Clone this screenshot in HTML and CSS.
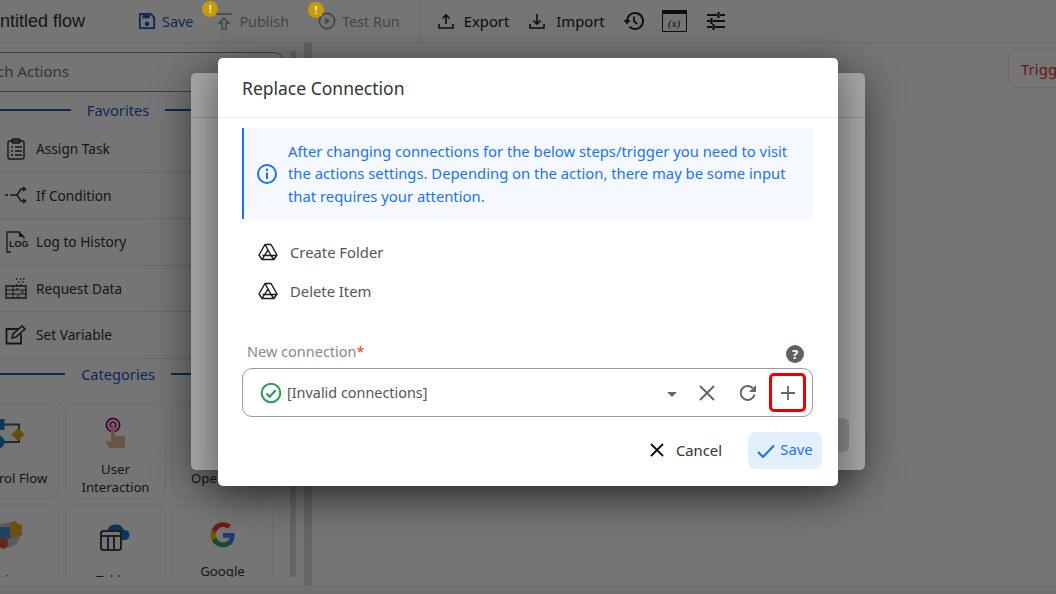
FILE: index.html
```html
<!DOCTYPE html>
<html lang="en">
<head>
<meta charset="utf-8">
<title>Replace Connection</title>
<link rel="stylesheet" href="styles.css">
</head>
<body>
<div class="app">
  <header class="topbar">
    <div class="flow-name">Untitled flow</div>
    <button class="tool tool-save"><svg width="18" height="18" viewBox="0 0 20 20"><path d="M2 2h12l4 4v12H2z" fill="none" stroke="currentColor" stroke-width="2" stroke-linejoin="round"/><rect x="5" y="3" width="8" height="4" fill="currentColor"/><circle cx="10" cy="13" r="2.5" fill="currentColor"/></svg>Save</button>
    <button class="tool tool-off tool-publish"><span class="warn">!</span><svg width="18" height="20" viewBox="0 0 18 20"><path d="M1 3h16" stroke="currentColor" stroke-width="1.6"/><path d="M9 7l-5 5h3v6h4v-6h3z" fill="none" stroke="currentColor" stroke-width="1.5"/></svg>Publish</button>
    <button class="tool tool-off tool-test"><span class="warn">!</span><svg width="18" height="18" viewBox="0 0 20 20"><circle cx="10" cy="10" r="8.500" fill="none" stroke="currentColor" stroke-width="1.8"/><path d="M8 6.500l5.500 3.500L8 13.500z" fill="currentColor"/></svg>Test Run</button>
    <span class="divider"></span>
    <button class="tool tool-export"><svg width="18" height="18" viewBox="0 0 18 18"><path d="M9 12V3M5.500 6.500L9 3l3.500 3.500M2 12v4h14v-4" fill="none" stroke="currentColor" stroke-width="1.6"/></svg>Export</button>
    <button class="tool tool-import"><svg width="18" height="18" viewBox="0 0 18 18"><path d="M9 2v10M5.500 8.500L9 12l3.500-3.500M2 12v4h14v-4" fill="none" stroke="currentColor" stroke-width="1.6"/></svg>Import</button>
    <svg class="ico-history" width="22" height="22" viewBox="0 0 22 22"><path d="M4 11a8 8 0 1 1 2.500 5.800" fill="none" stroke="currentColor" stroke-width="2"/><path d="M0.500 10h7L4 14.500z" fill="currentColor"/><path d="M11 6.500V11.500l3.500 2.500" fill="none" stroke="currentColor" stroke-width="1.800"/></svg>
    <span class="ico-var"><i>(x)</i></span>
    <svg class="ico-tune" width="20" height="20" viewBox="0 0 20 20"><path d="M1 4h10M14 4h5M12.500 1v6M1 10h3M7 10h12M5.500 7v6M1 16h5M9 16h10M7.500 13v6" stroke="currentColor" stroke-width="2.200" fill="none"/></svg>
  </header>
  <div class="workspace">
    <aside class="sidebar">
      <div class="search">Search Actions</div>
      <div class="section-title"><span>Favorites</span></div>
      <ul class="actions">
        <li><svg width="20" height="22" viewBox="0 0 20 22"><rect x="2" y="3" width="16" height="18" rx="2" fill="none" stroke="currentColor" stroke-width="1.400"/><rect x="6" y="1" width="8" height="4" rx="1" fill="none" stroke="currentColor" stroke-width="1.400"/><path d="M5 9h2M9 9h7M5 13h2M9 13h7M5 17h2M9 17h7" stroke="currentColor" stroke-width="1.300"/></svg>Assign Task</li>
        <li><svg width="22" height="18" viewBox="0 0 22 18"><path d="M0 9h3M5 9h3" stroke="currentColor" stroke-width="1.300"/><path d="M8 9h4l4-6h4M12 9l4 6h4M18 1l2.500 2-2.500 2M18 13l2.500 2-2.500 2" fill="none" stroke="currentColor" stroke-width="1.500"/></svg>If Condition</li>
        <li><span class="log-ico"><svg width="22" height="22" viewBox="0 0 22 22"><path d="M6 21H2V1h12l5 5v3" fill="none" stroke="currentColor" stroke-width="1.300"/><path d="M14 1v5h5z" fill="currentColor"/></svg><b>LOG</b></span>Log to History</li>
        <li><svg width="22" height="22" viewBox="0 0 22 22"><path d="M1 9h20v12H1z" fill="none" stroke="currentColor" stroke-width="1.400"/><path d="M1 13h20M1 17h20M8 9v12" stroke="currentColor" stroke-width="1"/><path d="M11 2h2M15 2h2M18 2h2M13 5h2M17 5h2M11 8h2M15 8h2M11 12h3M16 15h3M12 19h3" stroke="currentColor" stroke-width="1.400" stroke-dasharray="1.500 1"/></svg>Request Data</li>
        <li><svg width="22" height="20" viewBox="0 0 22 20"><path d="M13 4H1.500v14.500H16V9" fill="none" stroke="currentColor" stroke-width="1.800"/><path d="M7 13l1-4 9-8 3 3-9 8z" fill="none" stroke="currentColor" stroke-width="1.600"/></svg>Set Variable</li>
      </ul>
      <div class="section-title section-cats"><span>Categories</span></div>
      <div class="cards">
        <div class="card"><svg class="card-ico" width="38" height="34" viewBox="0 0 38 34"><path d="M12 8.500h17v10M12 26h17V18" fill="none" stroke="#4a5a66" stroke-width="2"/><rect x="4" y="3" width="10.500" height="11" fill="#1c7ec0"/><circle cx="8" cy="26" r="6.500" fill="#1c7ec0"/><path d="M28 12l6.500 6.500L28 25l-6.500-6.500z" fill="#e0a81c"/></svg><p>Control Flow</p></div>
        <div class="card"><svg class="card-ico" width="34" height="34" viewBox="0 0 34 34"><circle cx="14" cy="9" r="6.500" fill="none" stroke="#b0177f" stroke-width="2"/><circle cx="14" cy="9" r="2.800" fill="none" stroke="#b0177f" stroke-width="1.800"/><path d="M12 9h4v11h10v12H10l-4-8 6 2z" fill="#e6bb94"/></svg><p>User Interaction</p></div>
        <div class="card"><div class="card-ico"></div><p>Operators</p></div>
        <div class="card"><svg class="card-ico" width="38" height="38" viewBox="0 0 38 38"><circle cx="17.500" cy="19" r="14" fill="#c6c8cd"/><path d="M8 10h13.500v13H8z" fill="#4a90d9"/><path d="M8 23h9.500v9l-5 3-4.500-3z" fill="#d95a3a"/><path d="M20 5l6-2 2 3 6 2-1 6 1 5-6 1-3 3-5-3z" fill="#e8ae2c"/></svg><p>Actions</p></div>
        <div class="card"><svg class="card-ico" width="32" height="34" viewBox="0 0 32 34"><path d="M7 13a9 9 0 0 1 17-1 5 5 0 0 1 1 10H7z" fill="#1f72c4"/><rect x="1" y="13" width="20" height="19" rx="2.500" fill="#fff" stroke="#444" stroke-width="2"/><path d="M1 18h20M8 18v14M14 18v14" stroke="#444" stroke-width="2"/></svg><p>Tables</p></div>
        <div class="card"><svg class="card-ico" width="28" height="28" viewBox="0 0 48 48"><path d="M44 24.500c0-1.600-.1-2.800-.4-4H24v8h11.500c-.5 3-2.400 5.600-5 7.200l7 5.400C42 37 44 31 44 24.500z" fill="#4285f4"/><path d="M24 45c5.700 0 10.400-1.900 13.500-5l-7-5.400c-1.800 1.300-4.200 2.100-6.500 2.100-5.500 0-10.200-3.700-11.800-8.700l-7.300 5.600C8.300 40.500 15.600 45 24 45z" fill="#34a853"/><path d="M12.200 28c-.9-2.600-.9-5.400 0-8l-7.300-5.600c-3.100 6-3.100 13.200 0 19.200z" fill="#fbbc05"/><path d="M24 10.300c3 0 5.500 1 7.500 3l6.200-6.200C34.200 3.900 29.500 2 24 2 15.600 2 8.300 7 4.900 14.400l7.300 5.600c1.600-5 6.300-9.700 11.800-9.700z" fill="#ea4335"/></svg><p>Google Services</p></div>
      </div>
    </aside>
    <span class="side-scroll"></span>
    <main class="canvas"><div class="trigger">Trigger</div></main>
  </div>
  <div class="statusbar"></div>
</div>

<div class="scrim scrim-low"></div>
<section class="dialog-back">
  <div class="back-head"></div>
  <div class="back-btn"></div>
</section>
<div class="scrim"></div>

<section class="dialog">
  <h2 class="dialog-title">Replace Connection</h2>
  <div class="dialog-body">
    <div class="notice">
      <svg width="22" height="22" viewBox="0 0 22 22"><circle cx="11" cy="11" r="9" fill="none" stroke="#1a73e8" stroke-width="2"/><rect x="10" y="9.500" width="2" height="6.500" fill="#1a73e8"/><circle cx="11" cy="6.800" r="1.200" fill="#1a73e8"/></svg>
      <p>After changing connections for the below steps/trigger you need to visit the actions settings. Depending on the action, there may be some input that requires your attention.</p>
    </div>
    <ul class="steps">
      <li><svg width="20" height="18" viewBox="0 0 20 18"><path d="M7 1.500h6l6 10.500-3 4.500H4L1 12z M7 1.500l-6 10.500M7 1.500L10 7l-6 9.500M10 7l3 5.500H4.500M13 12.500l3 4M13 12.500H19" fill="none" stroke="#1b1b1b" stroke-width="1.400" stroke-linejoin="round"/></svg>Create Folder</li>
      <li><svg width="20" height="18" viewBox="0 0 20 18"><path d="M7 1.500h6l6 10.500-3 4.500H4L1 12z M7 1.500l-6 10.500M7 1.500L10 7l-6 9.500M10 7l3 5.500H4.500M13 12.500l3 4M13 12.500H19" fill="none" stroke="#1b1b1b" stroke-width="1.400" stroke-linejoin="round"/></svg>Delete Item</li>
    </ul>
    <div class="field-label">
      <label>New connection<em>*</em></label>
      <span class="help">?</span>
    </div>
    <div class="select">
      <svg class="ok-ico" width="22" height="22" viewBox="0 0 22 22"><circle cx="11" cy="11" r="9.300" fill="none" stroke="#25a04f" stroke-width="2"/><path d="M6.500 11.500l3.200 3.200 6-6.500" fill="none" stroke="#25a04f" stroke-width="2.200"/></svg>
      <span class="select-value">[Invalid connections]</span>
      <span class="caret"></span>
      <svg class="sel-x" width="16" height="16" viewBox="0 0 16 16"><path d="M1 1l14 14M15 1L1 15" stroke="#666" stroke-width="2"/></svg>
      <svg class="sel-refresh" width="20" height="20" viewBox="0 0 20 20"><path d="M16.500 11.500a7 7 0 1 1-1.800-6.500" fill="none" stroke="#666" stroke-width="2"/><path d="M18 2v7h-7z" fill="#666"/></svg>
      <span class="sel-add"><svg width="16" height="16" viewBox="0 0 16 16"><path d="M8 1v14M1 8h14" stroke="#666" stroke-width="1.800"/></svg></span>
    </div>
    <div class="actions-row">
      <button class="btn-cancel"><svg width="14" height="14" viewBox="0 0 14 14"><path d="M1 1l12 12M13 1L1 13" stroke="#111" stroke-width="1.800"/></svg>Cancel</button>
      <button class="btn-save"><svg width="18" height="14" viewBox="0 0 18 14"><path d="M1 8l5 5L17 1.500" fill="none" stroke="#1a73e8" stroke-width="2"/></svg><span>Save</span></button>
    </div>
  </div>
</section>
</body>
</html>
```
FILE: styles.css
```css
* { box-sizing: border-box; }
html, body { margin: 0; height: 100%; }
body {
  width: 1056px;
  height: 594px;
  overflow: hidden;
  font-family: "Noto Sans", sans-serif;
  background: #fff;
  color: #333;
  position: relative;
}
ul { list-style: none; margin: 0; padding: 0; }
button { font: inherit; background: none; border: 0; padding: 0; color: inherit; }

.app { height: 594px; display: flex; flex-direction: column; overflow: hidden; }

.topbar {
  height: 43px;
  flex: none;
  display: flex;
  align-items: center;
  color: #222;
  border-bottom: 1px solid #eee;
  background: #fff;
}
.flow-name {
  font: 18px "Liberation Sans", sans-serif;
  margin-left: -13px;
  width: 151px;
  flex: none;
  color: #333;
}
.tool { display: flex; align-items: center; gap: 6px; font-size: 14.400px; position: relative; flex: none; }
.tool-save { color: #1c57c4; margin-right: 22px; }
.tool-off { color: #9a9a9a; }
.tool-publish { margin-right: 29px; }
.tool-test { margin-right: 20px; }
.warn {
  position: absolute;
  z-index: 5;
  top: -10px;
  width: 16px;
  height: 16px;
  border-radius: 50%;
  background: #c49b0c;
  color: #f4e6b0;
  font-size: 11px;
  font-weight: 700;
  line-height: 16px;
  text-align: center;
}
.tool-publish .warn { left: -13px; }
.tool-test .warn { left: -10px; }
.divider { width: 1px; height: 43px; background: #eee; margin-right: 16px; flex: none; }
.tool-export { margin-right: 19px; gap: 9px; font-size: 14.800px; }
.tool-import { margin-right: 18px; gap: 10px; font-size: 14.800px; }
.ico-history { margin-right: 17px; flex: none; }
.ico-var {
  width: 25px;
  height: 22px;
  border: 1.500px solid #222;
  border-top-width: 4px;
  margin-right: 19px;
  font: 11px "Liberation Serif", serif;
  display: flex;
  align-items: center;
  justify-content: center;
  flex: none;
}
.ico-tune { flex: none; }

.workspace { flex: 1; display: flex; min-height: 0; background: #fff; }
.statusbar { height: 9px; flex: none; background: #f1f4f8; }
.sidebar { width: 325px; margin-left: -41px; padding-top: 9px; flex: none; height: 534px; overflow: hidden; }
.search {
  height: 40px;
  width: 325px;
  border: 1px solid #888;
  border-radius: 10px;
  padding-left: 6px;
  padding-bottom: 2px;
  display: flex;
  align-items: center;
  font-size: 15px;
  color: #777;
  margin-bottom: 8px;
}
.section-title {
  height: 20px;
  margin-right: 7px;
  display: flex;
  align-items: center;
  justify-content: center;
  gap: 16px;
  font-size: 14.600px;
  color: #1c57c4;
  overflow: hidden;
}
.section-title::before, .section-title::after {
  content: "";
  height: 2px;
  width: 120px;
  flex: none;
  background: #1c57c4;
}
.section-title span { white-space: nowrap; flex: none; }
.actions { margin: 6px 0 0 41px; width: 284px; }
.actions li {
  height: 46.500px;
  display: flex;
  align-items: center;
  gap: 9px;
  font-size: 13.700px;
  border-bottom: 1px solid #e3e3e3;
  padding-left: 5px;
}
.actions li svg { flex: none; width: 22px; }
.log-ico { position: relative; width: 22px; height: 22px; flex: none; }
.log-ico b { position: absolute; left: 4px; top: 8px; font: 700 9px "Liberation Sans", sans-serif; background: #fff; }
.section-cats { margin-top: 5px; }
.cards {
  margin: 19px 0 0 -1px;
  display: grid;
  grid-template-columns: repeat(3, 101px);
  grid-auto-rows: 96px;
  gap: 6px;
  justify-content: start;
}
.card {
  border: 1px solid #eee;
  border-radius: 10px;
  display: flex;
  flex-direction: column;
  align-items: center;
  text-align: center;
  font-size: 13.200px;
  padding: 12px 10px 0;
  line-height: 18px;
}
.card-ico { height: 34px; flex: none; }
.card p { margin: 10px 0 0; min-height: 36px; display: flex; align-items: center; justify-content: center; }
.side-scroll { width: 6px; background: #dcdcdc; margin: 8px 2px 8px 6px; flex: none; height: 526px; }
.canvas { flex: 1; margin-left: 6px; border-left: 8px solid #dcdcdc; background: #fff; position: relative; padding: 6px 0 0 696px; }
.trigger {
  width: 80px;
  height: 39px;
  border: 1px solid #e4e4e4;
  border-radius: 8px;
  color: #e53935;
  font-size: 15px;
  display: flex;
  align-items: center;
  padding-left: 12px;
}

.scrim { position: absolute; inset: 0; background: rgba(0, 0, 0, 0.34); }
.scrim-low { background: rgba(0, 0, 0, 0.3); }
.dialog-back {
  position: absolute;
  left: 191px;
  top: 73px;
  width: 674px;
  height: 397px;
  background: #fff;
  border-radius: 5px;
  box-shadow: 0 10px 40px rgba(0, 0, 0, 0.45);
}
.back-head { height: 45px; border-bottom: 1px solid #ddd; }
.back-btn { position: absolute; right: 16px; bottom: 18px; width: 40px; height: 34px; background: #d6d6d6; border-radius: 6px; }

.dialog {
  position: absolute;
  left: 218px;
  top: 58px;
  width: 620px;
  height: 428px;
  background: #fff;
  border-radius: 5px;
  box-shadow: 0 10px 40px rgba(0, 0, 0, 0.5);
}
.dialog-title {
  margin: 0;
  height: 60px;
  padding: 1px 0 0 24px;
  display: flex;
  align-items: center;
  font-size: 17.500px;
  font-weight: 400;
  color: #333;
  border-bottom: 1px solid #eee;
}
.dialog-body { padding: 10px 24px 0; }
.notice {
  width: 571px;
  height: 91px;
  background: #f5f9ff;
  border-left: 2px solid #1a73e8;
  display: flex;
  align-items: center;
  gap: 10px;
  padding-left: 12px;
  color: #1a73e8;
}
.notice svg { flex: none; }
.notice p { margin: 0; font-size: 14.800px; line-height: 22.500px; width: 520px; }
.steps { margin: 13px 0 0 16px; }
.steps li {
  height: 39px;
  display: flex;
  align-items: center;
  gap: 12px;
  font-size: 14.800px;
  color: #555;
}
.field-label {
  display: flex;
  justify-content: space-between;
  align-items: center;
  margin: 30px 10px 0 5px;
  height: 22px;
  font-size: 14.500px;
  color: #888;
}
.field-label em { color: #e53935; font-style: normal; }
.help {
  width: 18px;
  height: 18px;
  border-radius: 50%;
  background: #616161;
  color: #fff;
  font-size: 13px;
  font-weight: 700;
  line-height: 18px;
  text-align: center;
  margin-top: 6px;
}
.select {
  margin-top: 6px;
  width: 571px;
  height: 49px;
  border: 1.500px solid #999;
  border-radius: 10px;
  display: flex;
  align-items: center;
  padding-left: 17px;
}
.select-value { margin-left: 5px; font-size: 14.400px; color: #555; flex: 1; }
.caret {
  width: 0;
  height: 0;
  border: 5.500px solid transparent;
  border-top-color: #666;
  border-bottom-width: 0;
  margin: 3px 22px 0 0;
}
.sel-x { margin-right: 23px; }
.sel-refresh { margin-right: 11px; }
.sel-add {
  width: 37px;
  height: 39px;
  border: 3px solid #e60000;
  border-radius: 5px;
  display: flex;
  align-items: center;
  justify-content: center;
  margin-right: 6px;
}
.actions-row { display: flex; justify-content: flex-end; align-items: center; margin: 15px -8px 0 0; gap: 26px; }
.btn-cancel { display: flex; align-items: center; gap: 12px; font-size: 14.800px; color: #333; padding-bottom: 2px; }
.btn-save {
  width: 74px;
  height: 37px;
  background: #e3effd;
  border-radius: 8px;
  color: #1a73e8;
  font-size: 14.800px;
  display: flex;
  align-items: center;
  justify-content: center;
  gap: 5px;
}
.btn-save span { margin-top: -4px; }
```
